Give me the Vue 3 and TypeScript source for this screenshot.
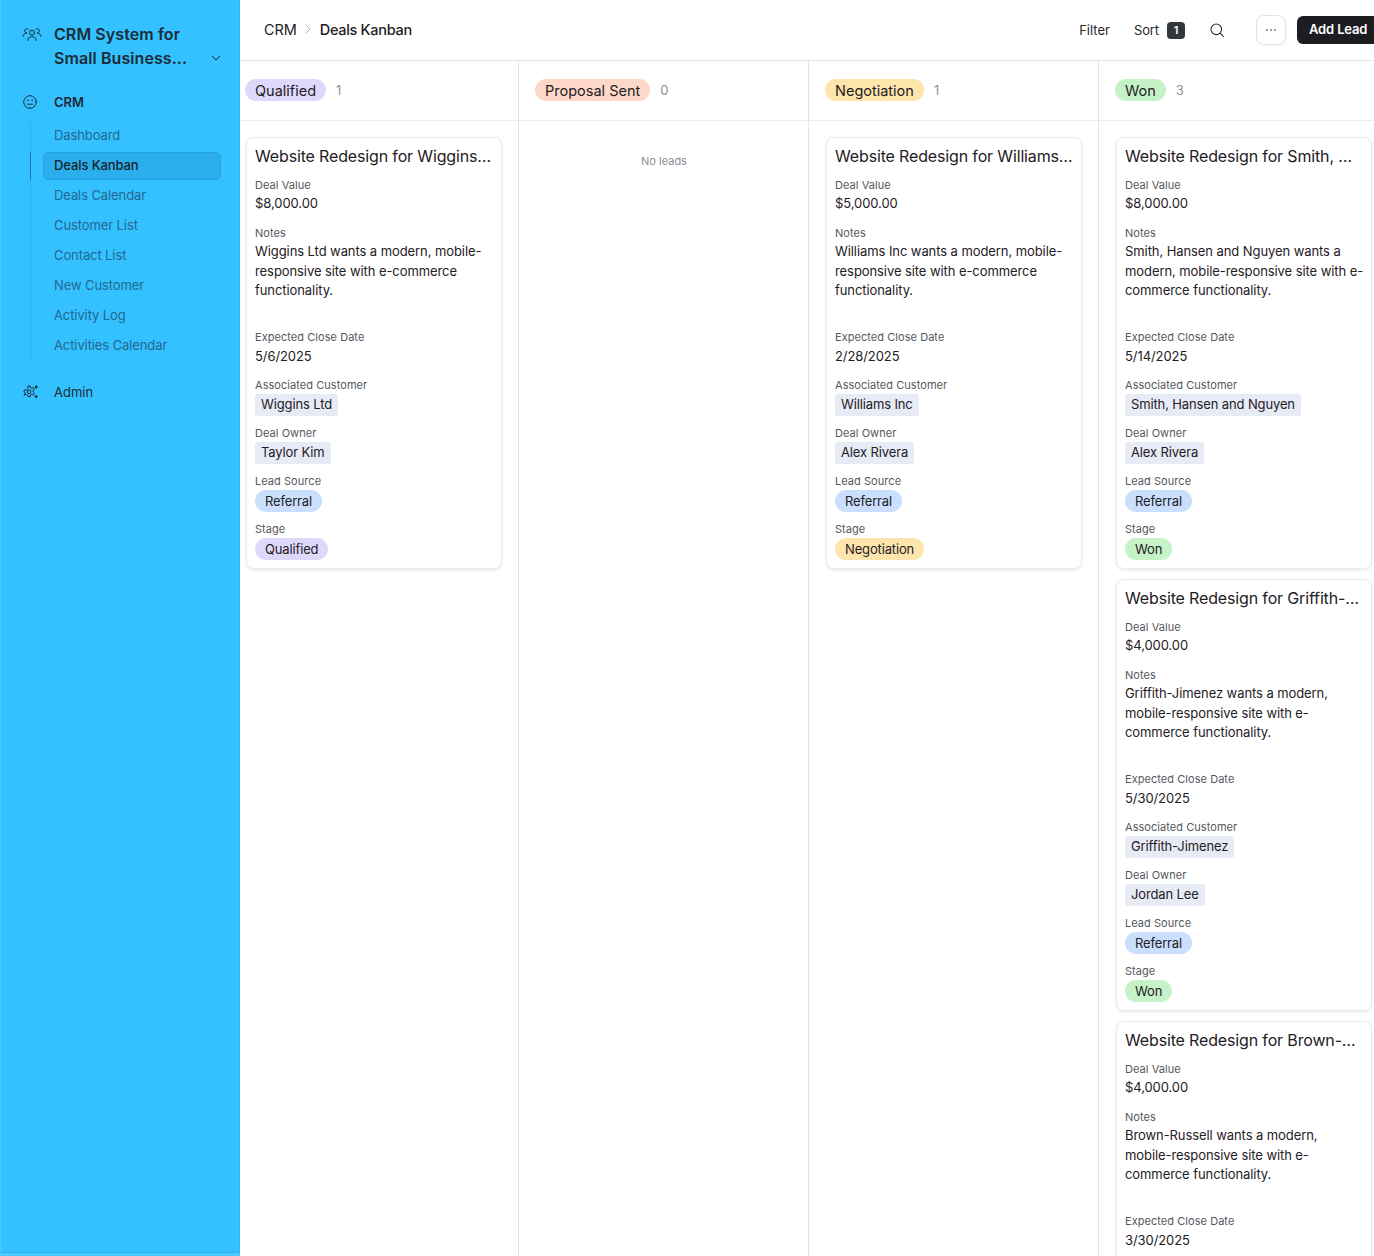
<script setup lang="ts">
interface Deal {
  title: string
  value: string
  customer: string
  date: string
  owner: string
  note: string
  stage: string
  stageClass: string
}
interface Column {
  stage: string
  stageClass: string
  deals: Deal[]
}

const note = 'wants a modern, mobile-responsive site with e-commerce functionality.'
const mk = (title: string, customer: string, value: string, date: string, owner: string, stage: string, stageClass: string): Deal => ({
  title: `Website Redesign for ${title}…`,
  value,
  customer,
  date,
  owner,
  note: `${customer} ${note}`,
  stage,
  stageClass,
})

const nav: string[] = [
  'Dashboard',
  'Deals Kanban',
  'Deals Calendar',
  'Customer List',
  'Contact List',
  'New Customer',
  'Activity Log',
  'Activities Calendar',
]

const columns: Column[] = [
  { stage: 'Qualified', stageClass: 'purple', deals: [mk('Wiggins', 'Wiggins Ltd', '$8,000.00', '5/6/2025', 'Taylor Kim', 'Qualified', 'purple')] },
  { stage: 'Proposal Sent', stageClass: 'peach', deals: [] },
  { stage: 'Negotiation', stageClass: 'yellow', deals: [mk('Williams', 'Williams Inc', '$5,000.00', '2/28/2025', 'Alex Rivera', 'Negotiation', 'yellow')] },
  {
    stage: 'Won',
    stageClass: 'green',
    deals: [
      mk('Smith, ', 'Smith, Hansen and Nguyen', '$8,000.00', '5/14/2025', 'Alex Rivera', 'Won', 'green'),
      mk('Griffith-', 'Griffith-Jimenez', '$4,000.00', '5/30/2025', 'Jordan Lee', 'Won', 'green'),
      mk('Brown-', 'Brown-Russell', '$4,000.00', '3/30/2025', 'Jordan Lee', 'Won', 'green'),
    ],
  },
]
</script>

<template>
  <div class="app">
    <aside class="sidebar">
      <div class="brand">
        <svg class="brand-icon" width="20" height="16" viewBox="0 0 20 16" fill="none" stroke="#1c2b36" stroke-width="1" stroke-linecap="round" stroke-linejoin="round">
          <circle cx="10" cy="6.6" r="2.5" />
          <path d="M5.6 14.6c.3-2.6 2.2-3.9 4.4-3.9s4.1 1.3 4.4 3.9" />
          <path d="M6.4 3.7A2.1 2.1 0 1 0 4.6 6.9" />
          <path d="M1 10.5c.2-2 1.6-3.2 3.4-3.4" />
          <path d="M13.6 3.7a2.1 2.1 0 1 1 1.8 3.2" />
          <path d="M19 10.5c-.2-2-1.6-3.2-3.4-3.4" />
        </svg>
        <div class="brand-name">CRM System for Small Business...</div>
        <svg class="brand-chevron" width="10" height="6" viewBox="0 0 10 6" fill="none" stroke="#1c2b36" stroke-width="1" stroke-linecap="round" stroke-linejoin="round">
          <path d="M1 1l4 4 4-4" />
        </svg>
      </div>

      <div class="group-head">
        <svg width="14" height="14" viewBox="0 0 14 14" fill="none" stroke="#1c2b36" stroke-width="1" stroke-linecap="round">
          <circle cx="7" cy="7" r="6.3" />
          <path d="M4.6 9.2h4.8" />
          <path d="M4.6 5.2h.6M8.8 5.2h.6" stroke-width="1.2" />
        </svg>
        <span>CRM</span>
      </div>

      <nav class="nav">
        <a v-for="item in nav" :key="item" class="nav-item" :class="{ active: item === 'Deals Kanban' }">{{ item }}</a>
      </nav>

      <div class="admin">
        <svg width="15" height="14" viewBox="0 0 15 14" fill="none" stroke="#1c2b36" stroke-width="1" stroke-linejoin="round">
          <path d="M5 .9h2.3l.3 1.7 1.2.6 1.6-.7 1.1 1.9-1.3 1.1v1.3l1.3 1.1-1.1 1.9-1.6-.7-1.2.6-.3 1.7H5l-.3-1.7-1.2-.6-1.6.7L.8 9.9l1.3-1.1V7.5L.8 6.4l1.1-1.9 1.6.7 1.2-.6z" transform="translate(0 .2)" />
          <circle cx="6.2" cy="6.9" r="1.7" />
          <circle cx="13.2" cy="2" r="1.4" fill="#1c2b36" stroke="none" />
          <circle cx="13.2" cy="11.6" r="1.4" fill="#1c2b36" stroke="none" />
        </svg>
        <span>Admin</span>
      </div>
    </aside>

    <main class="main">
      <header class="topbar">
        <div class="crumbs">
          <span class="crumb">CRM</span>
          <svg width="6" height="10" viewBox="0 0 6 10" fill="none" stroke="#b4b4b4" stroke-width="1" stroke-linecap="round" stroke-linejoin="round">
            <path d="M1 1l4 4-4 4" />
          </svg>
          <span class="crumb current">Deals Kanban</span>
        </div>
        <div class="actions">
          <span class="action filter">Filter</span>
          <span class="action sort">Sort</span>
          <span class="badge">1</span>
          <svg class="search" width="16" height="16" viewBox="0 0 16 16" fill="none" stroke="#27282c" stroke-width="1.1" stroke-linecap="round">
            <circle cx="7.3" cy="7.3" r="5.3" />
            <path d="M11.2 11.2l3.2 3.2" />
          </svg>
          <button class="more" type="button">
            <svg width="10" height="2" viewBox="0 0 10 2" fill="#6b6f76">
              <circle cx="1" cy="1" r="0.9" />
              <circle cx="5" cy="1" r="0.9" />
              <circle cx="9" cy="1" r="0.9" />
            </svg>
          </button>
          <button class="add" type="button">Add Lead</button>
        </div>
      </header>

      <div class="board">
        <section v-for="col in columns" :key="col.stage" class="column">
          <div class="col-head">
            <span class="pill head-pill" :class="col.stageClass">{{ col.stage }}</span>
            <span class="count">{{ col.deals.length }}</span>
          </div>
          <div class="col-body">
            <div v-if="col.deals.length === 0" class="empty">No leads</div>
            <article v-for="deal in col.deals" :key="deal.title" class="card">
              <h3 class="card-title">{{ deal.title }}</h3>
              <div class="field">
                <div class="label">Deal Value</div>
                <div class="value">{{ deal.value }}</div>
              </div>
              <div class="field">
                <div class="label">Notes</div>
                <div class="value notes">{{ deal.note }}</div>
              </div>
              <div class="field">
                <div class="label">Expected Close Date</div>
                <div class="value date">{{ deal.date }}</div>
              </div>
              <div class="field">
                <div class="label">Associated Customer</div>
                <span class="chip">{{ deal.customer }}</span>
              </div>
              <div class="field">
                <div class="label">Deal Owner</div>
                <span class="chip">{{ deal.owner }}</span>
              </div>
              <div class="field">
                <div class="label">Lead Source</div>
                <span class="pill small blue">Referral</span>
              </div>
              <div class="field last">
                <div class="label">Stage</div>
                <span class="pill small" :class="deal.stageClass">{{ deal.stage }}</span>
              </div>
            </article>
          </div>
        </section>
      </div>
    </main>
  </div>
</template>

<style>
html,
body {
  margin: 0;
  background: #fff;
}
</style>

<style scoped>
.app {
  display: flex;
  width: 1374px;
  height: 1256px;
  overflow: hidden;
  font-family: Inter, "Noto Sans", sans-serif;
  color: #1f2024;
}

.sidebar {
  flex: 0 0 240px;
  box-sizing: border-box;
  background: #33c1ff;
  box-shadow: inset 0 -3px 0 #4cc9ff, inset 0 -4px 0 #2eb6f3, inset -1px 0 0 #2eb6f3, inset 1px 0 0 #4cc9ff;
  padding-top: 22px;
  color: #1c2b36;
}

.brand {
  display: flex;
  align-items: flex-start;
  padding-left: 22px;
}
.brand-icon {
  margin-top: 4px;
  flex: none;
}
.brand-name {
  width: 140px;
  margin-left: 12px;
  font-size: 16px;
  font-weight: 600;
  line-height: 24px;
  letter-spacing: 0.08px;
}
.brand-chevron {
  margin: 33px 0 0 17px;
  flex: none;
}

.group-head {
  display: flex;
  align-items: center;
  height: 20px;
  margin-top: 22px;
  padding-left: 23px;
  gap: 17px;
  font-size: 13px;
  font-weight: 600;
}

.nav {
  display: flex;
  flex-direction: column;
  gap: 2px;
  margin: 10px 0 0 30px;
  border-left: 1px solid rgba(30, 100, 150, 0.18);
}
.nav-item {
  position: relative;
  display: block;
  box-sizing: border-box;
  height: 28px;
  margin: 0 19px 0 12px;
  padding-left: 11px;
  border-radius: 6px;
  font-size: 13px;
  line-height: 26px;
  color: #24688f;
  letter-spacing: -0.1px;
}
.nav-item.active {
  background: #2aafec;
  box-shadow: inset 0 0 0 1px rgba(30, 140, 210, 0.35);
  color: #17242e;
  font-weight: 500;
}
.nav-item.active::before {
  content: "";
  position: absolute;
  left: -13px;
  top: 0;
  bottom: 0;
  width: 1px;
  background: #2478ad;
}

.admin {
  display: flex;
  align-items: center;
  height: 20px;
  margin-top: 22px;
  padding-left: 23px;
  gap: 16px;
  font-size: 13px;
  font-weight: 400;
}

.main {
  flex: 1;
  min-width: 0;
  overflow: hidden;
}

.topbar {
  display: flex;
  align-items: center;
  justify-content: space-between;
  box-sizing: border-box;
  height: 61px;
  width: 1134px;
  padding-left: 24px;
  border-bottom: 1px solid #e4e4e4;
}
.crumbs {
  display: flex;
  align-items: center;
  gap: 8px;
  padding-bottom: 2px;
  font-size: 14.5px;
  letter-spacing: -0.1px;
}
.crumb.current {
  margin-left: 1px;
  font-weight: 500;
  color: #1f2024;
  letter-spacing: -0.3px;
}

.actions {
  display: flex;
  align-items: center;
  margin-right: -23px;
  font-size: 13px;
}
.action {
  color: #27282c;
}
.sort {
  margin-left: 24px;
  letter-spacing: -0.1px;
}
.badge {
  display: flex;
  align-items: center;
  justify-content: center;
  width: 18px;
  height: 17px;
  margin-left: 8px;
  border-radius: 4px;
  background: #33363d;
  color: #fff;
  font-size: 11px;
  font-weight: 600;
}
.search {
  margin-left: 24px;
}
.more {
  display: flex;
  align-items: center;
  justify-content: center;
  width: 30px;
  height: 30px;
  margin-left: 31px;
  padding: 0;
  border: 1px solid #e4e4e4;
  border-radius: 8px;
  background: #fff;
  box-shadow: 0 1px 2px rgba(0, 0, 0, 0.05);
}
.add {
  width: 100px;
  height: 28px;
  margin-left: 11px;
  padding: 0 0 2px 12px;
  border: 0;
  border-radius: 6px;
  background: #1c1d21;
  color: #fff;
  font-family: inherit;
  font-size: 13px;
  font-weight: 600;
  letter-spacing: -0.15px;
  text-align: left;
}

.board {
  display: flex;
  margin-left: -11px;
}
.column {
  flex: 0 0 290px;
  box-sizing: border-box;
  min-height: 1195px;
  border-right: 1px solid #e4e4e4;
}
.col-head {
  display: flex;
  align-items: center;
  box-sizing: border-box;
  height: 60px;
  padding: 0 0 1px 16px;
  gap: 10px;
  border-bottom: 1px solid #ececec;
}
.col-body {
  padding: 16px 0 0 17px;
}
.empty {
  width: 256px;
  margin-top: 17px;
  text-align: center;
  font-size: 11px;
  color: #8a8d93;
}

.pill {
  display: inline-flex;
  align-items: center;
  box-sizing: border-box;
  border-radius: 999px;
  color: #1f2024;
}
.head-pill {
  height: 22px;
  padding: 0 10px;
  font-size: 14.5px;
}
.pill.small {
  height: 22px;
  padding: 0 10px;
  font-size: 13px;
  letter-spacing: -0.15px;
}
.count {
  font-size: 13px;
  color: #8f9297;
}
.purple { background: #ded9fb; }
.peach { background: #fdd8c8; }
.yellow { background: #fde5ac; }
.green { background: #c6f2c8; }
.blue { background: #c9dffd; }

.card {
  box-sizing: border-box;
  width: 256px;
  margin-bottom: 10px;
  padding: 6px 8px 8px;
  border: 1px solid #ebebeb;
  border-radius: 8px;
  background: #fff;
  box-shadow: 0 1px 3px rgba(0, 0, 0, 0.1);
}
.card-title {
  margin: 0 0 10px;
  font-size: 16px;
  font-weight: 400;
  line-height: 24px;
  letter-spacing: -0.15px;
  white-space: nowrap;
}
.field {
  display: flex;
  flex-direction: column;
  align-items: flex-start;
  margin-bottom: 10px;
}
.field.last {
  margin-bottom: 0;
}
.label {
  height: 14px;
  margin-bottom: 2px;
  font-size: 11px;
  line-height: 14px;
  color: #55585e;
  letter-spacing: 0.05px;
}
.value {
  box-sizing: border-box;
  min-height: 22px;
  font-size: 13px;
  line-height: 19.5px;
  letter-spacing: -0.08px;
}
.value.date {
  padding-top: 1px;
}
.value.notes {
  min-height: 78px;
  margin-right: -2px;
}
.chip {
  display: inline-flex;
  align-items: center;
  box-sizing: border-box;
  height: 22px;
  padding: 0 6px 2px;
  border-radius: 3px;
  background: #e7ebf6;
  font-size: 13px;
  letter-spacing: -0.13px;
}
</style>
